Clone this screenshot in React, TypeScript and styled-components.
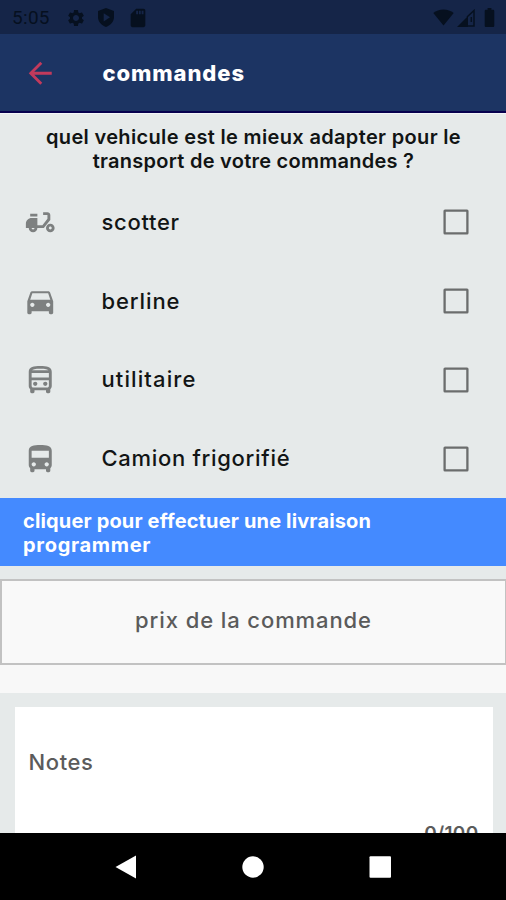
import React from "react";
import styled, { createGlobalStyle } from "styled-components";
import {
  MdArrowBack,
  MdBatteryFull,
  MdDirectionsBus,
  MdDirectionsCar,
  MdMoped,
  MdOutlineDirectionsBus,
  MdSdCard,
  MdSettings,
} from "react-icons/md";
import type { IconType } from "react-icons";

const GlobalStyle = createGlobalStyle`
  *, *::before, *::after { box-sizing: border-box; }
  body { margin: 0; background: #e6eaea; }
`;

const Screen = styled.div`
  display: flex;
  flex-direction: column;
  width: 506px;
  height: 900px;
  overflow: hidden;
  background: #e6eaea;
  font-family: Inter, "Open Sans", sans-serif;
`;

const StatusBar = styled.header`
  flex: none;
  display: flex;
  align-items: center;
  justify-content: space-between;
  height: 34px;
  padding: 1px 5px 0 12px;
  background: #152548;
  color: #06101f;
`;

const StatusGroup = styled.div<{ $gap: number }>`
  display: flex;
  align-items: center;
  gap: ${(p) => p.$gap}px;

  svg { display: block; }
`;

const Clock = styled.span`
  width: 42px;
  font: 400 19px/24px Roboto, sans-serif;
  letter-spacing: 0.3px;
`;

const AppBar = styled.div`
  flex: none;
  display: flex;
  align-items: center;
  height: 79px;
  padding: 0 22px 0 23px;
  background: #1c3463;
  border-bottom: 2px solid #08014f;
  color: #c23a5c;

  svg { display: block; margin-top: 2px; }
`;

const Title = styled.h1`
  margin: 0 0 0 45px;
  color: #fff;
  font-size: 22px;
  font-weight: 800;
  line-height: 28px;
  letter-spacing: 0.9px;
`;

const Content = styled.main`
  flex: 1;
  min-height: 0;
  overflow: hidden;
  border-top: 1px solid #f4f5f8;
`;

const Question = styled.h2`
  margin: 11px 0 10px 1px;
  color: #111414;
  font-size: 20px;
  font-weight: 600;
  line-height: 24px;
  text-align: center;
`;

const Line = styled.span<{ $spacing: number }>`
  display: block;
  letter-spacing: ${(p) => p.$spacing}px;
`;

const VehicleRow = styled.label`
  display: flex;
  align-items: center;
  height: 78.8px;
  padding: 0 37px 0 22.5px;
  color: #7d8080;

  svg { display: block; flex: none; }
`;

const VehicleName = styled.span<{ $spacing: number }>`
  flex: 1;
  margin: -1px 0 0 44.5px;
  color: #121515;
  font-size: 22px;
  font-weight: 550;
  line-height: 28px;
  letter-spacing: ${(p) => p.$spacing}px;
`;

const ScheduleBanner = styled.button`
  display: block;
  width: 100%;
  height: 68px;
  margin: 0;
  padding: 11px 23px 9px;
  border: 0;
  background: #448aff;
  color: #fff;
  font-family: inherit;
  font-size: 20px;
  font-weight: 700;
  line-height: 24px;
  text-align: left;
`;

const PriceSection = styled.section`
  height: 114px;
  margin-top: 13px;
  background: #f8f8f8;
`;

const PriceBox = styled.div`
  display: flex;
  align-items: center;
  justify-content: center;
  height: 86px;
  padding-bottom: 4px;
  border: 2px solid #c2c2c2;
  border-right-width: 1px;
  background: #f9f9f9;
  color: #5b5b5b;
  font-size: 22px;
  font-weight: 550;
  letter-spacing: 0.9px;
`;

const NotesCard = styled.section`
  display: flex;
  flex-direction: column;
  justify-content: space-between;
  height: 146px;
  margin: 14px 13.5px 0 14.5px;
  padding: 41px 14px 7px;
  background: #fff;
  color: #5b5b5b;
`;

const NotesLabel = styled.span`
  font-size: 22px;
  font-weight: 550;
  line-height: 28px;
  letter-spacing: 0.6px;
`;

const Counter = styled.span`
  align-self: flex-end;
  font-size: 19px;
  font-weight: 600;
  line-height: 24px;
  letter-spacing: 0.3px;
`;

const NavBar = styled.nav`
  flex: none;
  display: flex;
  align-items: center;
  gap: 103.5px;
  height: 67px;
  padding-left: 113.5px;
  background: #000;

  svg { display: block; }
`;

const ShieldIcon = () => (
  <svg width="18" height="19" viewBox="0 0 18 19">
    <path fill="currentColor" fillRule="evenodd" d="M9 0 17 3v6c0 4.8-3.2 8.1-8 10-4.8-1.9-8-5.2-8-10V3zM6.7 5.2v8.2L13 9.3z" />
  </svg>
);

const WifiIcon = () => (
  <svg width="21" height="17" viewBox="0 0 22 17">
    <path fill="currentColor" d="M11 17 .3 3.800C3.200 1.300 6.900 0 11 0s7.800 1.300 10.700 3.800z" />
  </svg>
);

const SignalIcon = () => (
  <svg width="18" height="18" viewBox="0 0 18 18">
    <path fill="currentColor" d="M0 18 11 7v11z" />
    <path fill="none" stroke="currentColor" strokeWidth="1.500" d="M10 8 17 1.500v15.500h-6M14.300 8v5" />
  </svg>
);

const Checkbox = () => (
  <svg width="26" height="26" viewBox="0 0 26 26">
    <rect x="1.600" y="1.600" width="22.800" height="22.800" rx=".4" fill="none" stroke="#6b6d6d" strokeWidth="2.300" />
  </svg>
);

interface Vehicle {
  name: string;
  icon: IconType;
  spacing: number;
}

const vehicles: Vehicle[] = [
  { name: "scotter", icon: MdMoped, spacing: 0.7 },
  { name: "berline", icon: MdDirectionsCar, spacing: 0.9 },
  { name: "utilitaire", icon: MdOutlineDirectionsBus, spacing: 1.1 },
  { name: "Camion frigorifié", icon: MdDirectionsBus, spacing: 0.7 },
];

export default function App() {
  return (
    <Screen>
      <GlobalStyle />
      <StatusBar>
        <StatusGroup $gap={11.5}>
          <Clock>5:05</Clock>
          <MdSettings size={20} />
          <ShieldIcon />
          <MdSdCard size={22} />
        </StatusGroup>
        <StatusGroup $gap={3}>
          <WifiIcon />
          <SignalIcon />
          <MdBatteryFull size={23} />
        </StatusGroup>
      </StatusBar>
      <AppBar>
        <MdArrowBack size={34.5} />
        <Title>commandes</Title>
      </AppBar>
      <Content>
        <Question>
          <Line $spacing={0.34}>quel vehicule est le mieux adapter pour le</Line>
          <Line $spacing={0.26}>transport de votre commandes ?</Line>
        </Question>
        {vehicles.map(({ name, icon: Icon, spacing }) => (
          <VehicleRow key={name}>
            <Icon size={34.5} />
            <VehicleName $spacing={spacing}>{name}</VehicleName>
            <Checkbox />
          </VehicleRow>
        ))}
        <ScheduleBanner>
          <Line $spacing={0.15}>cliquer pour effectuer une livraison</Line>
          <Line $spacing={0.7}>programmer</Line>
        </ScheduleBanner>
        <PriceSection>
          <PriceBox>prix de la commande</PriceBox>
        </PriceSection>
        <NotesCard>
          <NotesLabel>Notes</NotesLabel>
          <Counter>0/100</Counter>
        </NotesCard>
      </Content>
      <NavBar>
        <svg width="24" height="24" viewBox="0 0 24 24">
          <path d="M1.500 12 22 .5v23z" fill="#fff" />
        </svg>
        <svg width="24" height="24" viewBox="0 0 24 24">
          <circle cx="12" cy="12" r="10.700" fill="#fff" />
        </svg>
        <svg width="24" height="24" viewBox="0 0 24 24">
          <rect x="0.500" y="1.200" width="21.500" height="21.500" rx="1" fill="#fff" />
        </svg>
      </NavBar>
    </Screen>
  );
}
